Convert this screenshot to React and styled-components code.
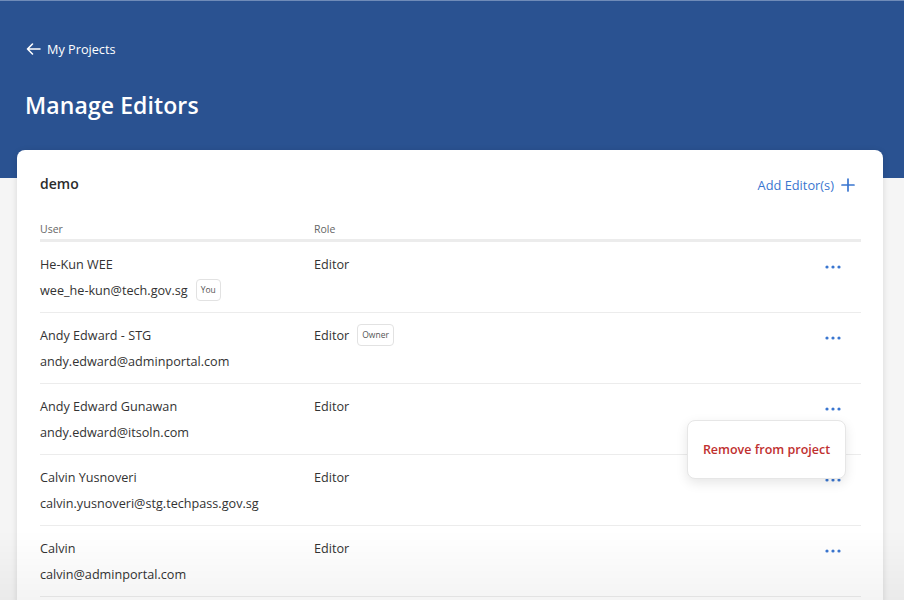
import React from "react";
import styled, { createGlobalStyle } from "styled-components";

const GlobalStyle = createGlobalStyle`
    * { box-sizing: border-box; }
    body {
        margin: 0;
        background: #f5f5f5;
        font-family: "Open Sans", "Noto Sans", sans-serif;
        color: #333;
    }
`;

const editors = [
    { name: "He-Kun WEE", email: "wee_he-kun@tech.gov.sg", role: "Editor", you: true },
    { name: "Andy Edward - STG", email: "andy.edward@adminportal.com", role: "Editor", owner: true },
    { name: "Andy Edward Gunawan", email: "andy.edward@itsoln.com", role: "Editor", menu: true },
    { name: "Calvin Yusnoveri", email: "calvin.yusnoveri@stg.techpass.gov.sg", role: "Editor" },
    { name: "Calvin", email: "calvin@adminportal.com", role: "Editor" },
];

const ArrowLeft = () => (
    <svg width="15" height="14" viewBox="0 0 15 14" fill="none" stroke="#fff" strokeWidth="1.6" strokeLinecap="round" strokeLinejoin="round">
        <path d="M14 7H1.5M6.5 2L1.5 7l5 5" />
    </svg>
);

const Plus = () => (
    <svg width="14" height="14" viewBox="0 0 14 14" stroke="#3a76d0" strokeWidth="1.7" strokeLinecap="round">
        <path d="M7 1v12M1 7h12" />
    </svg>
);

const Dots = () => (
    <svg width="16" height="4" viewBox="0 0 16 4" fill="#3a76d0">
        <circle cx="2" cy="2" r="1.6" />
        <circle cx="8" cy="2" r="1.6" />
        <circle cx="14" cy="2" r="1.6" />
    </svg>
);

const App = () => {
    return (
        <>
            <GlobalStyle />
            <Header>
                <BackLink>
                    <ArrowLeft />
                    My Projects
                </BackLink>
                <Title>Manage Editors</Title>
            </Header>
            <Page>
                <Card>
                    <CardTop>
                        <ProjectName>demo</ProjectName>
                        <AddButton>
                            Add Editor(s) <Plus />
                        </AddButton>
                    </CardTop>
                    <HeadRow>
                        <span>User</span>
                        <span>Role</span>
                        <span />
                    </HeadRow>
                    {editors.map((e) => (
                        <Row key={e.email}>
                            <UserCell>
                                <Line>{e.name}</Line>
                                <Line>
                                    {e.email}
                                    {e.you && <Badge>You</Badge>}
                                </Line>
                            </UserCell>
                            <Line>
                                {e.role}
                                {e.owner && <Badge>Owner</Badge>}
                            </Line>
                            <ActionCell>
                                <DotsButton>
                                    <Dots />
                                </DotsButton>
                                {e.menu && (
                                    <Menu>
                                        <MenuItem>Remove from project</MenuItem>
                                    </Menu>
                                )}
                            </ActionCell>
                        </Row>
                    ))}
                </Card>
            </Page>
            <BottomFade />
        </>
    );
};

const Header = styled.header`
    background: #2a5291;
    border-top: 1px solid #6f8bb8;
    height: 178px;
    padding: 39px 25px 0;
    color: #fff;
`;

const BackLink = styled.a`
    display: flex;
    align-items: center;
    gap: 6px;
    font-size: 12.7px;
    line-height: 18px;
    color: #fff;
    cursor: pointer;
    padding-left: 1px;
`;

const Title = styled.h1`
    margin: 31px 0 0;
    font-size: 23px;
    line-height: 32px;
    font-weight: 600;
    letter-spacing: 0.1px;
`;

const Page = styled.main`
    padding: 0 21px 0 17px;
    margin-top: -28px;
`;

const Card = styled.section`
    background: #fff;
    border-radius: 8px;
    box-shadow: 0 1px 6px rgba(0, 0, 0, 0.12);
    padding: 23px 22px 0 23px;
    min-height: 460px;
`;

const CardTop = styled.div`
    display: flex;
    justify-content: space-between;
    align-items: center;
    padding-right: 6px;
`;

const ProjectName = styled.h2`
    margin: 0;
    font-size: 14px;
    line-height: 20px;
    font-weight: 600;
    color: #2b2b2b;
`;

const AddButton = styled.button`
    display: flex;
    align-items: center;
    gap: 7px;
    border: none;
    background: none;
    padding: 0;
    margin-top: 2px;
    font-family: inherit;
    font-size: 12.8px;
    line-height: 20px;
    color: #3a76d0;
    cursor: pointer;
`;

const grid = `
    display: grid;
    grid-template-columns: 274px 1fr 60px;
`;

const HeadRow = styled.div`
    ${grid}
    margin-top: 26px;
    padding-bottom: 2px;
    border-bottom: 3px solid #ececec;
    font-size: 10.5px;
    line-height: 16px;
    color: #666;
`;

const Row = styled.div`
    ${grid}
    padding: 12px 0;
    border-bottom: 1px solid #ececec;
    font-size: 12.65px;
`;

const UserCell = styled.div`
    display: flex;
    flex-direction: column;
    gap: 6px;
`;

const Line = styled.div`
    display: flex;
    align-items: center;
    gap: 8px;
    height: 20px;
    line-height: 20px;
    color: #333;
`;

const Badge = styled.span`
    display: inline-flex;
    align-items: center;
    height: 22px;
    padding: 0 4px;
    border: 1px solid #e2e2e2;
    border-radius: 4px;
    font-size: 8.5px;
    color: #555;
`;

const ActionCell = styled.div`
    position: relative;
    display: flex;
    justify-content: flex-end;
    align-items: flex-start;
    padding-right: 16px;
`;

const DotsButton = styled.button`
    width: 24px;
    height: 24px;
    margin-top: 1px;
    display: flex;
    align-items: center;
    justify-content: center;
    border: none;
    background: none;
    padding: 0;
    cursor: pointer;
`;

const Menu = styled.div`
    position: absolute;
    top: 24px;
    right: 15px;
    width: 159px;
    height: 59px;
    display: flex;
    align-items: center;
    justify-content: center;
    background: #fff;
    border: 1px solid #e6e6e6;
    border-radius: 8px;
    box-shadow: 0 4px 12px rgba(0, 0, 0, 0.1);
    z-index: 10;
`;

const MenuItem = styled.span`
    font-size: 12.5px;
    font-weight: 600;
    color: #c0302f;
`;

const BottomFade = styled.div`
    position: fixed;
    left: 0;
    right: 0;
    bottom: 0;
    height: 70px;
    background: linear-gradient(rgba(0, 0, 0, 0), rgba(0, 0, 0, 0.045));
    pointer-events: none;
`;

export default App;
